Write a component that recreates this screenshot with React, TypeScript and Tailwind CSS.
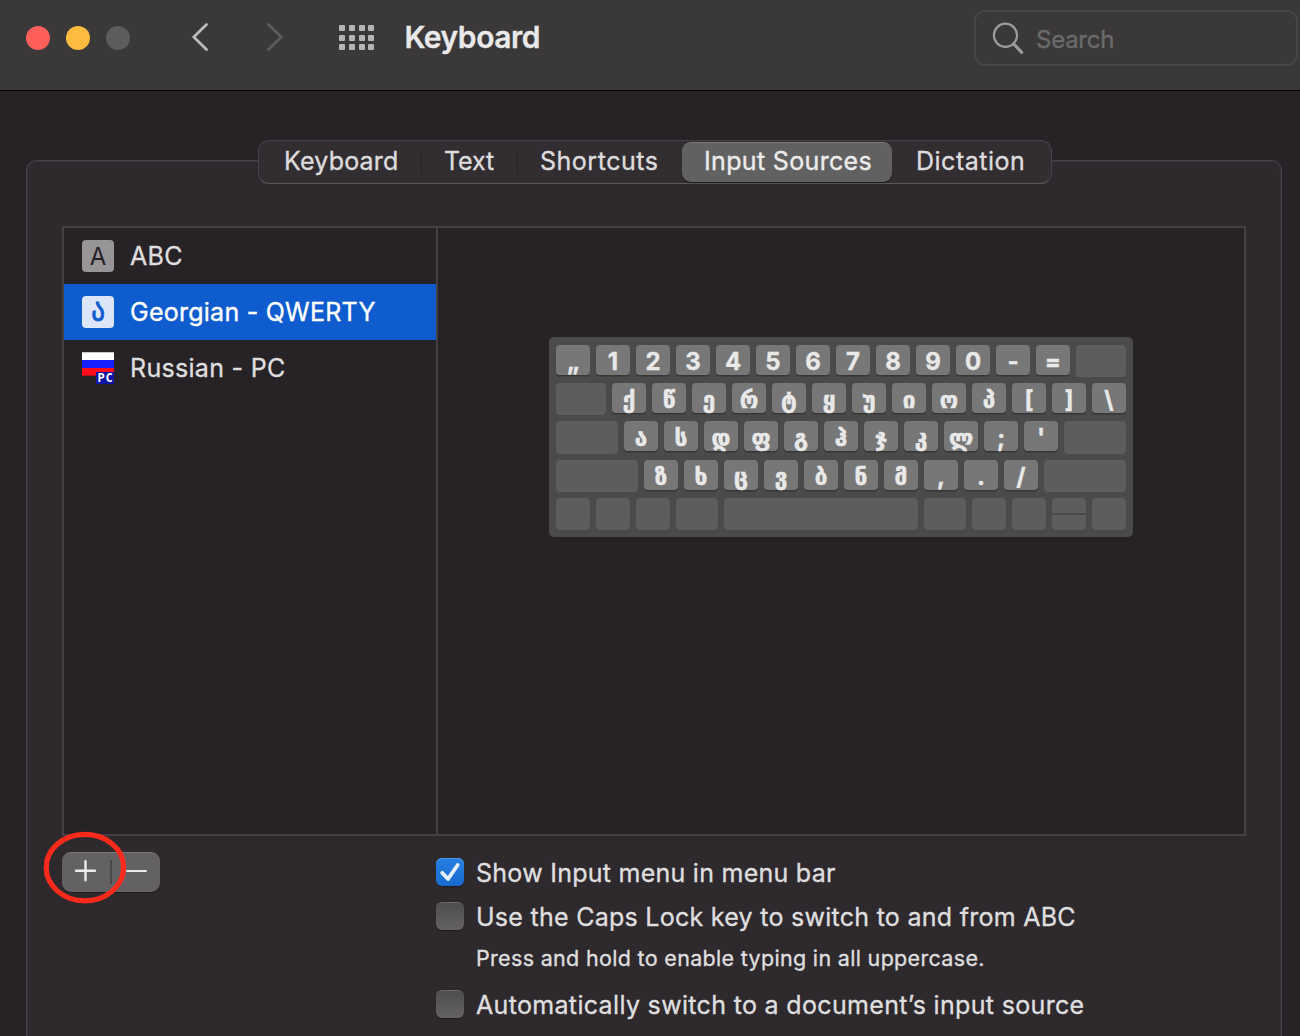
import React from "react";

function Toolbar() {
  return (
    <header className="flex h-[91px] shrink-0 items-start border-b border-black bg-[#3a3838] pl-[26px]">
      <div className="mt-[26px] flex gap-4">
        <span className="size-6 rounded-full bg-[#fe5f5b]" />
        <span className="size-6 rounded-full bg-[#fdbb40]" />
        <span className="size-6 rounded-full bg-[#5d5b5c]" />
      </div>
      <svg className="mt-[22px] ml-[60px] h-[30px] w-5" fill="none" stroke="#bcbbbc" strokeWidth="2.8" strokeLinecap="round" viewBox="0 0 20 30">
        <path d="M16.5 2.5 3.8 15l12.7 12.5" />
      </svg>
      <svg className="mt-[22px] ml-[55px] h-[30px] w-5" fill="none" stroke="#5d5c5c" strokeWidth="2.8" strokeLinecap="round" viewBox="0 0 20 30">
        <path d="M3.5 2.5 16.2 15 3.5 27.5" />
      </svg>
      <div className="mt-[25px] ml-[54px] grid grid-cols-4 gap-x-[3.8px] gap-y-[3.5px]">
        {Array.from({ length: 12 }, (_, i) => (
          <span key={i} className="size-[6px] rounded-[1px] bg-[#b5b4b4]" />
        ))}
      </div>
      <h1 className="mt-[17px] ml-[30px] text-[30px] leading-10 font-semibold tracking-[-0.45px] text-[#e9e9e9] [-webkit-text-stroke:0.3px]">Keyboard</h1>
      <div className="mt-[10px] mr-[2px] ml-auto flex h-14 w-[324px] rounded-[11px] border-2 border-[#474545]">
        <svg className="mt-[9px] ml-[14px] size-9" fill="none" stroke="#9c9b9b" viewBox="0 0 36 36">
          <circle cx="15.5" cy="14.3" r="11.6" strokeWidth="2.2" />
          <path d="m23.7 23 8 8.3" strokeWidth="3.2" strokeLinecap="round" />
        </svg>
        <span className="mt-2 ml-[10px] text-[24px] leading-10 tracking-[-0.25px] text-[#6b6a6a] [-webkit-text-stroke:0.4px]">Search</span>
      </div>
    </header>
  );
}

function Tabs() {
  return (
    <nav className="relative z-10 mx-auto -mt-[21px] mr-[229px] ml-[231px] flex h-11 w-[794px] rounded-[11px] border border-[#454146] border-b-[#5a575a] bg-[#322d31] text-[25px] leading-[41px] whitespace-nowrap text-[#dddcdd]">
      <span className="w-[162px] pl-[25px] tracking-[0.2px]">Keyboard</span>
      <span className="mt-[9px] h-6 w-px bg-[#272327]" />
      <span className="w-[95px] pl-[22px] tracking-[-0.1px]">Text</span>
      <span className="mt-[9px] h-6 w-px bg-[#272327]" />
      <span className="w-[164px] pl-[22px] tracking-[0.52px]">Shortcuts</span>
      <span className="mt-px h-10 w-[210px] rounded-[9px] border-t border-[#7b7a7b] bg-[#626162] pl-[22px] leading-[37px] tracking-[0.34px] text-[#ececec] shadow-[0_1px_1px_#1f1b1f]">Input Sources</span>
      <span className="pl-6 tracking-[0.5px]">Dictation</span>
    </nav>
  );
}

function SourceList() {
  return (
    <ul className="w-[374px] shrink-0 border-r-2 border-[#444044] text-[25px] leading-[56px] whitespace-nowrap">
      <li className="flex h-14 items-center gap-4 pl-[18px]">
        <span className="size-8 rounded-[4px] bg-[#979597] pt-px text-center text-[24px] leading-8 text-[#272226] [-webkit-text-stroke:0]">A</span>
        <span className="tracking-[0.3px]">ABC</span>
      </li>
      <li className="flex h-14 items-center gap-4 bg-[#0f5ccf] pl-[18px] text-white">
        <span className="flex size-8 items-center justify-center rounded-[4px] bg-[#dbe6f8] text-[#0f5ccf]">
          <span className="-mt-[3px] scale-y-[1.15] font-['DejaVu_Sans',sans-serif] text-[27px] leading-8 [-webkit-text-stroke:0.8px]">ა</span>
        </span>
        <span className="tracking-[0.25px]">Georgian - QWERTY</span>
      </li>
      <li className="flex h-14 items-center gap-4 pl-[18px]">
        <span className="relative flex size-8 flex-col">
          <span className="h-2 border-t border-[#c9c9c9] bg-white" />
          <span className="h-2 bg-[#1420ff]" />
          <span className="h-2 border-b border-[#b5101a] bg-[#ff0d1b]" />
          <span className="absolute right-0 bottom-0 h-3 w-[18px] bg-[#0b16a8] pl-px text-center font-['DejaVu_Sans_Mono',monospace] text-[12px] leading-3 font-bold tracking-[0.8px] text-white [-webkit-text-stroke:0]">PC</span>
        </span>
        <span className="tracking-[0.3px]">Russian - PC</span>
      </li>
    </ul>
  );
}

function Key({ c }: { c: string }) {
  const georgian = c >= "ა" && c <= "ჰ";
  return (
    <div className="h-[30px] w-[34px] shrink-0 rounded-[4px] bg-[#777777] pt-[1.5px] text-center text-[24px] leading-[30px] font-bold text-[#e9e9e9] shadow-[0_1.5px_0_#363636]">
      {georgian ? <span className="font-['DejaVu_Sans',sans-serif] text-[22.5px] leading-none [-webkit-text-stroke:0.6px]">{c}</span> : c}
    </div>
  );
}

function Keys({ chars }: { chars: string }) {
  return Array.from(chars).map((c) => <Key key={c} c={c} />);
}

function Blank({ w }: { w: string }) {
  return <div className={`shrink-0 rounded-[4px] bg-[#5d5d5d] ${w}`} />;
}

function KeyboardMap() {
  return (
    <div className="mt-[109px] ml-[111px] flex h-[200px] w-[584px] flex-col gap-[6px] rounded-[5px] bg-[#4a4a4a] pt-2 pr-[7px] pb-[7px] pl-[7px]">
      <div className="flex h-8 gap-[6px]">
        <Keys chars="„1234567890-=" />
        <Blank w="w-[50px]" />
      </div>
      <div className="flex h-8 gap-[6px]">
        <Blank w="w-[50px]" />
        <Keys chars="ქწერტყუიოპ[]\" />
      </div>
      <div className="flex h-[33px] gap-[6px]">
        <Blank w="w-[62px]" />
        <Keys chars="ასდფგჰჯკლ;'" />
        <Blank w="w-[62px]" />
      </div>
      <div className="flex h-8 gap-[6px]">
        <Blank w="w-[82px]" />
        <Keys chars="ზხცვბნმ,./" />
        <Blank w="w-[82px]" />
      </div>
      <div className="flex h-8 gap-[6px]">
        <Blank w="w-[34px]" />
        <Blank w="w-[34px]" />
        <Blank w="w-[34px]" />
        <Blank w="w-[42px]" />
        <Blank w="w-[194px]" />
        <Blank w="w-[42px]" />
        <Blank w="w-[34px]" />
        <Blank w="w-[34px]" />
        <div className="flex w-[34px] flex-col gap-[2px]">
          <div className="h-[15px] rounded-t-[4px] bg-[#5d5d5d]" />
          <div className="h-[15px] rounded-b-[4px] bg-[#5d5d5d]" />
        </div>
        <Blank w="w-[34px]" />
      </div>
    </div>
  );
}

function AddRemove() {
  return (
    <div className="relative mt-4 flex h-10 w-[98px] shrink-0 rounded-[9px] border-t border-[#7a777a] bg-[#646164] shadow-[0_1px_1px_#1f1b1f]">
      <svg className="h-[39px] w-[49px]" stroke="#ebebeb" strokeWidth="2.4" strokeLinecap="round" viewBox="0 0 49 39">
        <path d="M14 17.7h19M23.5 8.2v19" />
      </svg>
      <span className="mt-[7px] -ml-px h-6 w-[2px] bg-[#4b484b]" />
      <svg className="h-[39px] w-12" stroke="#ebebeb" strokeWidth="2" strokeLinecap="round" viewBox="0 0 48 39">
        <path d="M15 18h19" />
      </svg>
      <svg className="absolute -top-[23px] -left-5 h-[76px] w-[88px]" fill="none" stroke="#fe2a1c" strokeWidth="5.2" viewBox="0 0 88 76">
        <ellipse cx="42.9" cy="37.6" rx="38.7" ry="33.3" />
      </svg>
    </div>
  );
}

function Check({ on = false }: { on?: boolean }) {
  if (!on) {
    return <span className="size-7 shrink-0 rounded-[6px] border-t border-[#6c696c] bg-linear-to-b from-[#4f4c4f] to-[#656265] shadow-[0_1px_1px_#1f1b1f]" />;
  }
  return (
    <span className="size-7 shrink-0 rounded-[6px] bg-linear-to-b from-[#2580e4] to-[#1a6ace] shadow-[inset_0_1px_0_#4f9bea,0_1px_1px_#1f1b1f]">
      <svg className="size-7" fill="none" stroke="#e6effb" strokeWidth="3.8" strokeLinecap="round" strokeLinejoin="round" viewBox="0 0 28 28">
        <path d="m6.2 14.8 5.8 6.2 9.7-14" />
      </svg>
    </span>
  );
}

function Options() {
  return (
    <div className="mt-[22px] ml-[276px] text-[25px] leading-[30px] whitespace-nowrap">
      <div className="flex h-11 gap-3">
        <Check on />
        <span className="tracking-[0.26px]">Show Input menu in menu bar</span>
      </div>
      <div className="flex h-10 gap-3">
        <Check />
        <span className="tracking-[0.27px]">Use the Caps Lock key to switch to and from ABC</span>
      </div>
      <div className="h-12 pl-10 text-[21.5px] leading-8 tracking-[0.32px]">Press and hold to enable typing in all uppercase.</div>
      <div className="flex gap-3">
        <Check />
        <span className="tracking-[0.33px]">Automatically switch to a document’s input source</span>
      </div>
    </div>
  );
}

export default function App() {
  return (
    <div className="flex h-[1036px] w-[1300px] flex-col overflow-hidden bg-[#272226] font-['Inter',sans-serif] text-[#dfdedf]">
      <Toolbar />
      <main className="mt-[69px] ml-[26px] h-[900px] w-[1256px] shrink-0 rounded-[10px] border border-[#454146] bg-[#2e292d] shadow-[inset_0_0_0_1px_#373236] [-webkit-text-stroke:0.35px]">
        <Tabs />
        <section className="mt-[42px] ml-[35px] flex h-[610px] w-[1184px] border-2 border-[#444044] bg-[#272226]">
          <SourceList />
          <KeyboardMap />
        </section>
        <div className="ml-[35px] flex">
          <AddRemove />
          <Options />
        </div>
      </main>
    </div>
  );
}
